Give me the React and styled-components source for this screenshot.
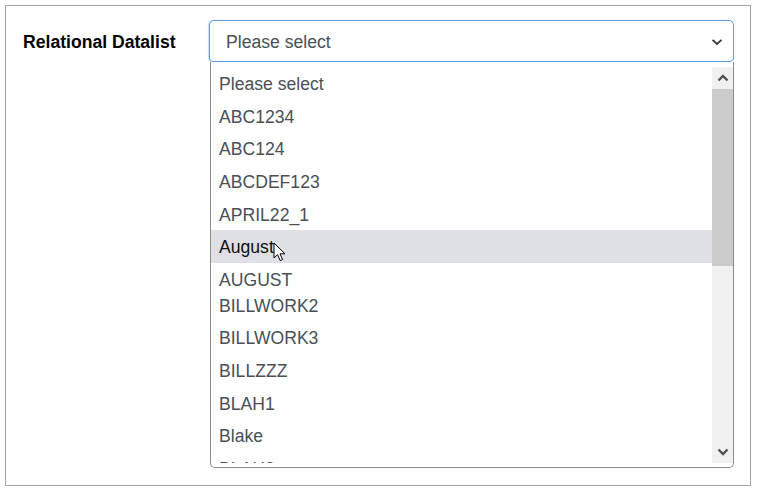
import React from "react";
import styled, { createGlobalStyle } from "styled-components";

const Global = createGlobalStyle`
  html, body { margin: 0; padding: 0; background: #fff; }
  body { font-family: "Liberation Sans", Arial, sans-serif; }
  * { box-sizing: border-box; }
`;

const Frame = styled.div`
  margin: 5px 0 0 5px;
  width: 746px;
  height: 481px;
  border: 1px solid #a6a6a6;
  padding: 14px 16px 0 17px;
`;

const FieldRow = styled.div`
  display: flex;
  align-items: flex-start;
`;

const Label = styled.label`
  width: 186px;
  height: 42px;
  display: flex;
  align-items: center;
  font-weight: bold;
  font-size: 17.6px;
  color: #000;
  padding-top: 2px;
`;

const SelectWrap = styled.div`
  position: relative;
  flex: 1;
`;

const SelectBox = styled.div`
  height: 42px;
  border: 1px solid #5c98ee;
  border-radius: 5px 5px 4px 4px;
  box-shadow: -1px 0 1px 0 rgba(100, 160, 240, 0.35);
  display: flex;
  align-items: center;
  justify-content: space-between;
  padding: 2px 10px 0 16px;
  font-size: 17.6px;
  color: #495057;
  background: #fff;
`;

const Listbox = styled.div`
  position: absolute;
  top: 42px;
  left: 1px;
  right: 0;
  height: 406px;
  background: #fff;
  border: 1px solid #8c8c8c;
  border-top: none;
  border-radius: 0 0 5px 5px;
  padding: 5px 0 4px 0;
  display: flex;
`;

const Options = styled.div`
  flex: 1;
  overflow: hidden;
  display: flex;
  flex-direction: column;
`;

const Option = styled.div`
  flex: none;
  height: ${(p) => (p.$short ? "25.67px" : "32.67px")};
  line-height: 32.67px;
  padding: 1px 0 0 8px;
  font-size: 17.6px;
  white-space: nowrap;
  color: ${(p) => (p.$active ? "#111" : "#4a4f55")};
  background: ${(p) => (p.$active ? "#dfdfe6" : "transparent")};
  position: relative;
`;

const Scrollbar = styled.div`
  width: 21px;
  display: flex;
  flex-direction: column;
  background: #f0f0f0;
`;

const ScrollButton = styled.div`
  height: 22px;
  display: flex;
  align-items: center;
  justify-content: center;
`;

const Thumb = styled.div`
  height: 177px;
  background: #cbcbcb;
`;

const Track = styled.div`
  flex: 1;
`;

const Cursor = styled.svg`
  position: absolute;
  left: 62px;
  top: 12px;
  width: 14px;
  height: 21px;
`;

const items = [
  "Please select",
  "ABC1234",
  "ABC124",
  "ABCDEF123",
  "APRIL22_1",
  "August",
  "AUGUST",
  "BILLWORK2",
  "BILLWORK3",
  "BILLZZZ",
  "BLAH1",
  "Blake",
  "BLAH2",
];

export default function App() {
  return (
    <>
      <Global />
      <Frame>
        <FieldRow>
          <Label>Relational Datalist</Label>
          <SelectWrap>
            <SelectBox>
              <span>Please select</span>
              <svg width="12" height="8" viewBox="0 0 12 8">
                <path d="M1.5 1.8 L6 6 L10.5 1.8" fill="none" stroke="#343a40" strokeWidth="1.8" />
              </svg>
            </SelectBox>
            <Listbox>
              <Options>
                {items.map((t) => (
                  <Option key={t} $active={t === "August"} $short={t === "AUGUST"}>
                    {t}
                    {t === "August" && (
                      <Cursor viewBox="0 0 14 21">
                        <path
                          d="M1 1 L1 16 L4.6 12.6 L7.2 18.6 L9.6 17.6 L7 11.8 L12 11.8 Z"
                          fill="#fff"
                          stroke="#000"
                          strokeWidth="1"
                          strokeLinejoin="round"
                        />
                      </Cursor>
                    )}
                  </Option>
                ))}
              </Options>
              <Scrollbar>
                <ScrollButton>
                  <svg width="12" height="8" viewBox="0 0 12 8">
                    <path d="M1.5 6.5 L6 2 L10.5 6.5" fill="none" stroke="#505050" strokeWidth="2.4" />
                  </svg>
                </ScrollButton>
                <Thumb />
                <Track />
                <ScrollButton>
                  <svg width="12" height="8" viewBox="0 0 12 8">
                    <path d="M1.5 1.5 L6 6 L10.5 1.5" fill="none" stroke="#505050" strokeWidth="2.4" />
                  </svg>
                </ScrollButton>
              </Scrollbar>
            </Listbox>
          </SelectWrap>
        </FieldRow>
      </Frame>
    </>
  );
}
